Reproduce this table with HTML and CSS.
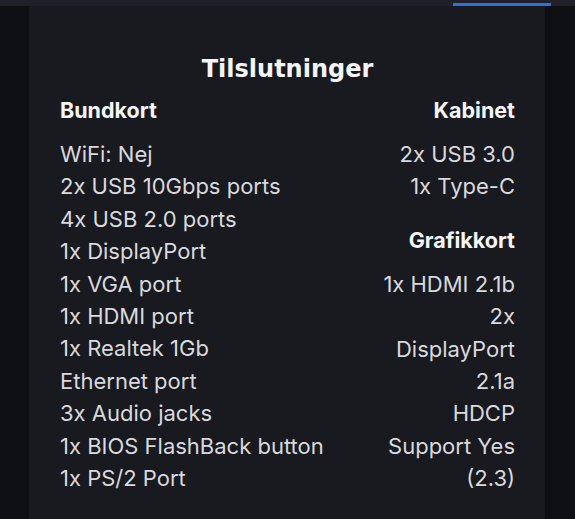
FILE: index.html
```html
<html>
  <head>
    <title>Tilslutninger</title>
    <link rel="stylesheet" href="styles.css">
  </head>
  <body>
    <div class="topbar">
      <div class="tab-line"></div>
    </div>
    <div class="stage">
      <div class="panel">
        <h2 class="title">Tilslutninger</h2>
        <div class="columns">
          <div class="col">
            <h3>Bundkort</h3>
            <ul class="list">
              <li>WiFi: Nej</li>
              <li>2x USB 10Gbps ports</li>
              <li>4x USB 2.0 ports</li>
              <li>1x DisplayPort</li>
              <li>1x VGA port</li>
              <li>1x HDMI port</li>
              <li>1x Realtek 1Gb<br>Ethernet port</li>
              <li>3x Audio jacks</li>
              <li>1x BIOS FlashBack button</li>
              <li>1x PS/2 Port</li>
            </ul>
          </div>
          <div class="col right">
            <h3>Kabinet</h3>
            <ul class="list">
              <li>2x USB 3.0</li>
              <li>1x Type-C</li>
            </ul>
            <h3 class="sub">Grafikkort</h3>
            <ul class="list">
              <li>1x HDMI 2.1b</li>
              <li>2x<br>DisplayPort<br>2.1a<br>HDCP<br>Support Yes<br>(2.3)</li>
            </ul>
          </div>
        </div>
      </div>
    </div>
  </body>
</html>
```
FILE: styles.css
```css
/* page */
body {
  margin: 0;
  background-color: #0e0f13;
  font-family: Inter, "Noto Sans", sans-serif;
  color: #d9d9de;
  width: 575px;
  height: 519px;
  overflow: hidden;
}
.topbar {
  height: 6px;
  background-color: #1f2029;
  position: relative;
}
.tab-line {
  position: absolute;
  left: 453px;
  top: 3px;
  width: 98px;
  height: 3px;
  background-color: #2a73dc;
}
.stage {
  padding: 0 30px 0 29px;
}
.panel {
  background-color: #181a20;
  height: 513px;
  padding: 46px 30px 0 31px;
  box-sizing: border-box;
}
.title {
  margin: 0 0 8px 0;
  text-align: center;
  font-family: "DejaVu Sans", Inter, sans-serif;
  font-size: 24px;
  font-weight: 700;
  color: #f4f4f6;
  line-height: 34px;
}
.columns {
  display: flex;
  justify-content: space-between;
}
.col h3 {
  margin: 0 0 12px 0;
  font-size: 21.5px;
  font-weight: 700;
  color: #f6f6f8;
  line-height: 32px;
}
.col h3.sub {
  margin-top: 21px;
  margin-bottom: 12px;
}
.right {
  text-align: right;
}
.list {
  list-style: none;
  margin: 0;
  padding: 0;
}
.list li {
  font-size: 22px;
  line-height: 32.4px;
}
```
